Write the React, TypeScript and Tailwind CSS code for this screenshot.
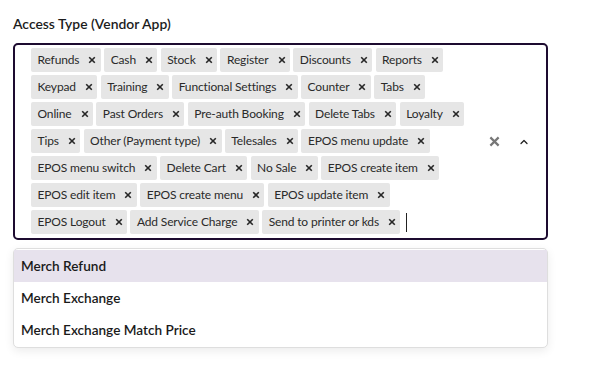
import { ChevronUp } from 'lucide-react';

// rows as they wrap in the picture
const rows = [
  ['Refunds', 'Cash', 'Stock', 'Register', 'Discounts', 'Reports'],
  ['Keypad', 'Training', 'Functional Settings', 'Counter', 'Tabs'],
  ['Online', 'Past Orders', 'Pre-auth Booking', 'Delete Tabs', 'Loyalty'],
  ['Tips', 'Other (Payment type)', 'Telesales', 'EPOS menu update'],
  ['EPOS menu switch', 'Delete Cart', 'No Sale', 'EPOS create item'],
  ['EPOS edit item', 'EPOS create menu', 'EPOS update item'],
  ['EPOS Logout', 'Add Service Charge', 'Send to printer or kds'],
];

const options = ['Merch Refund', 'Merch Exchange', 'Merch Exchange Match Price'];

function SmallX({ className }: { className?: string }) {
  return (
    <svg viewBox="0 0 10 10" className={className} fill="none" stroke="currentColor" strokeWidth="2" strokeLinecap="butt">
      <path d="M1.5 1.5 L8.5 8.5 M8.5 1.5 L1.5 8.5" />
    </svg>
  );
}

export default function App() {
  return (
    <div
      className="w-[598px] h-[370px] bg-white pl-[13px] pt-[14px] text-[#1c1c1c]"
      style={{ fontFamily: 'Lato, "Noto Sans", sans-serif' }}
    >
      <label className="block text-[13.9px] font-semibold leading-[20px]">
        Access Type (Vendor App)
      </label>

      <div className="mt-[9px] w-[535px] h-[197px] border-2 border-[#1d0b30] rounded-[5px] flex">
        {/* Selected values */}
        <div className="w-[461px] pl-[16px] pt-[1px] flex flex-col">
          {rows.map((row, r) => (
            <div key={r} className="flex">
              {row.map((item) => (
                <div
                  key={item}
                  className="mt-[2px] mb-[1px] mr-[3.3px] h-[24px] flex items-center bg-[#e6e6e6] rounded-[2px] pl-[6.5px] pr-[4.5px] text-[12px] tracking-[-0.15px] text-[#2a2a2a] whitespace-nowrap"
                >
                  <span>{item}</span>
                  <SmallX className="ml-[9px] w-[8px] h-[8px] text-[#262626]" />
                </div>
              ))}
              {r === rows.length - 1 && (
                <div className="mt-[2px] h-[24px] flex items-center pl-[2px]">
                  <div className="w-px h-[19px] bg-[#222]" />
                </div>
              )}
            </div>
          ))}
        </div>

        {/* Indicators */}
        <div className="flex-1 flex items-center justify-end pr-[12px] gap-[10px]">
          <div className="w-[20px] h-[20px] flex items-center justify-center">
            <svg viewBox="0 0 12 12" className="w-[11px] h-[11px] text-[#777]" fill="none" stroke="currentColor" strokeWidth="2.4">
              <path d="M1.5 1.5 L10.5 10.5 M10.5 1.5 L1.5 10.5" />
            </svg>
          </div>
          <div className="w-[20px] h-[20px] flex items-center justify-center">
            <ChevronUp className="w-[12px] h-[12px] text-[#222]" strokeWidth={2.5} />
          </div>
        </div>
      </div>

      {/* Menu */}
      <div className="mt-[8px] w-[535px] border border-[#dedede] rounded-[5px] bg-white shadow-[0_3px_10px_rgba(0,0,0,0.08)] py-[1px]">
        {options.map((opt, i) => (
          <div
            key={opt}
            className={`h-[32px] flex items-center px-[7px] text-[13.6px] font-semibold text-[#1a1a1a] ${i === 0 ? 'bg-[#e7e2ed]' : ''}`}
          >
            {opt}
          </div>
        ))}
      </div>
    </div>
  );
}
